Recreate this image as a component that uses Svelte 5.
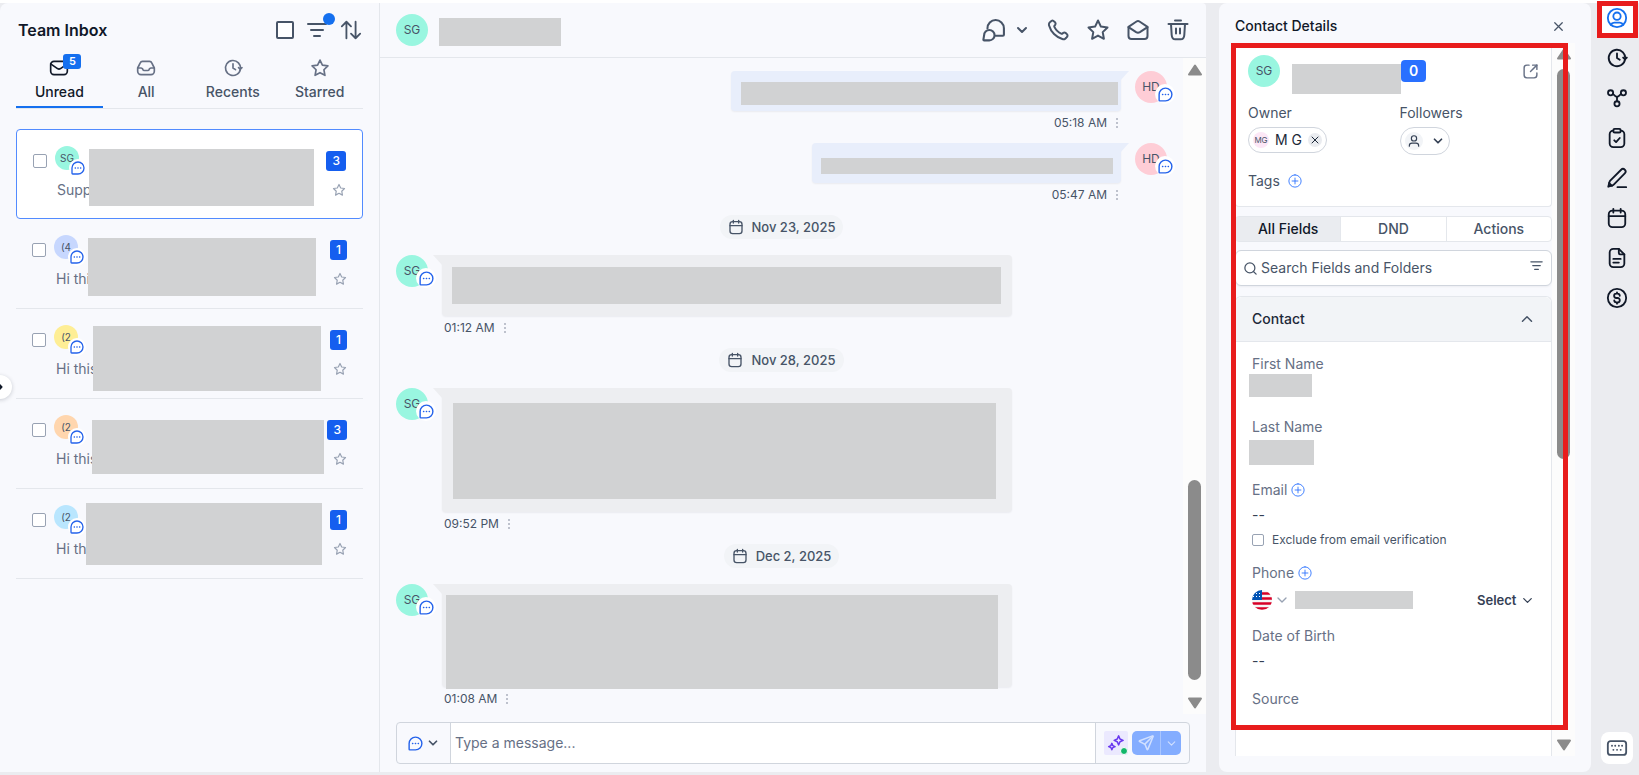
<script lang="ts">
    const icons: Record<string, string[]> = {
        filter: ['M3 6h18', 'M6 12h12', 'M9 18h6'],
        sort: ['M7 21V3M7 3L2 8M7 3l5 5', 'M17 3v18M17 21l-5-5M17 21l5-5'],
        mail: ['M6 4h12a4 4 0 0 1 4 4v8a4 4 0 0 1-4 4H6a4 4 0 0 1-4-4V8a4 4 0 0 1 4-4z', 'M2 7l8.2 5.7q1.8 1.1 3.6 0L22 7'],
        inbox: ['M2.5 12h3.7a2 2 0 0 1 1.7 1.1l.3.6A2 2 0 0 0 10 15h4a2 2 0 0 0 1.8-1.3l.3-.6A2 2 0 0 1 17.8 12h3.7', 'M7.8 4h8.4a3 3 0 0 1 2.7 1.9L22 12v4a4 4 0 0 1-4 4H6a4 4 0 0 1-4-4v-4l3.100-6.100A3 3 0 0 1 7.800 4z'],
        recent: ['M22.7 11.5l-2 2-2-2', 'M20.9 13A9 9 0 1 1 18.5 5.8 9 9 0 0 1 21 12', 'M12 7v5l3 2'],
        star: ['M12 2.5l2.9 6.1 6.6.9-4.8 4.6 1.2 6.7-5.9-3.2-5.9 3.2 1.2-6.7-4.8-4.6 6.6-.9z'],
        chat: ['M12 3a9 9 0 1 1 0 18H4q-1 0-1-1v-8a9 9 0 0 1 9-9z', 'M7.8 12h.4M11.8 12h.4M15.8 12h.4'],
        conversations: ['M6.2 10A7.9 7.9 0 0 1 22 9.8V16q0 1-1 1h-7', 'M8 11.5a5 5 0 1 1 0 10H3q-.8 0-.7-.8l.7-4.200a5 5 0 0 1 5-5z'],
        phone: ['M8.38 8.853c.696 1.45 1.645 2.809 2.847 4.01 1.201 1.202 2.56 2.151 4.01 2.847.444.213.8.18 1.127-.035.3-.2.6-.6.939-.858a2 2 0 0 1 2.18 0c.176.115.351.29.7.639l.195.195c.532.531.798.797.942 1.082a2 2 0 0 1 0 1.806c-.144.285-.41.551-.942 1.082l-.158.158c-.529.53-.794.795-1.154.997-.4.224-1.02.386-1.478.384-.413-.001-.695-.081-1.26-.241a18.5 18.5 0 0 1-8.283-4.874A18.5 18.5 0 0 1 3.171 7.761c-.16-.564-.24-.846-.241-1.259-.002-.459.16-1.079.384-1.478.202-.36.467-.625.997-1.155l.157-.157c.532-.532.798-.798 1.083-.942a2 2 0 0 1 1.805 0c.286.144.552.41 1.083.942l.195.194c.35.35.524.525.638.701a2 2 0 0 1 0 2.18c-.3.46-.7.7-.858.939-.2.3-.23.7-.034 1.127z'],
        mailOpen: ['M21.5 18V8.8l-8-5.3q-1.5-1-3 0l-8 5.3V18a3 3 0 0 0 3 3h13a3 3 0 0 0 3-3z', 'M2.5 9.2l7.6 5q1.9 1.1 3.8 0l7.6-5'],
        trash: ['M9 2.5h6', 'M2.5 6h19', 'M5 6l.7 11c.2 3 .9 4.3 3.6 4.3h5.4c2.7 0 3.4-1.3 3.6-4.3L19 6', 'M10 10.5v5M14 10.5v5'],
        calendar: ['M7 4h10a4 4 0 0 1 4 4v10a4 4 0 0 1-4 4H7a4 4 0 0 1-4-4V8a4 4 0 0 1 4-4z', 'M3 10h18', 'M8 2v4M16 2v4'],
        chevronDown: ['M6 9l6 6 6-6'],
        chevronUp: ['M18 15l-6-6-6 6'],
        chevronRight: ['M9 18l6-6-6-6'],
        close: ['M18 6L6 18M6 6l12 12'],
        external: ['M21 9V3h-6', 'M21 3l-9 9', 'M10 3H7a4 4 0 0 0-4 4v10a4 4 0 0 0 4 4h10a4 4 0 0 0 4-4v-3'],
        plus: ['M12 1.5a10.5 10.5 0 1 1 0 21 10.5 10.5 0 0 1 0-21z', 'M12 7v10M7 12h10'],
        user: ['M12 3a4.5 4.5 0 1 1 0 9 4.5 4.5 0 0 1 0-9z', 'M4 21v-1a4.5 4.5 0 0 1 4.5-4.5h7A4.5 4.5 0 0 1 20 20v1'],
        search: ['M11 3a8 8 0 1 1 0 16 8 8 0 0 1 0-16z', 'M21 21l-4.3-4.3'],
        profile: ['M12 2a10 10 0 1 1 0 20 10 10 0 0 1 0-20z', 'M12 6a4 4 0 1 1 0 8 4 4 0 0 1 0-8z', 'M5.3 19.4q1-2.4 3.7-2.4h6q2.7 0 3.7 2.4'],
        nodes: ['M5 3.5a2.8 2.8 0 1 1 0 5.6 2.8 2.8 0 0 1 0-5.6z', 'M19 3.5a2.8 2.8 0 1 1 0 5.6 2.8 2.8 0 0 1 0-5.6z', 'M12 15.5a2.8 2.8 0 1 1 0 5.6 2.8 2.8 0 0 1 0-5.6z', 'M7.5 7.5l3 2.7q1.5 1.1 3 0l3-2.7', 'M12 11v4.5'],
        clipboard: ['M16 4a4 4 0 0 1 4 4v10a4 4 0 0 1-4 4H8a4 4 0 0 1-4-4V8a4 4 0 0 1 4-4', 'M9.5 2h5A1.5 1.5 0 0 1 16 3.5v1A1.5 1.5 0 0 1 14.5 6h-5A1.5 1.5 0 0 1 8 4.5v-1A1.5 1.5 0 0 1 9.5 2z', 'M9 14.5l2 2 4-4.5'],
        pen: ['M12.5 22H22', 'M2.5 21.5l1.2-4.8q.2-1 .9-1.8L16.5 3a2.8 2.8 0 0 1 4 4L8.7 19q-.7.7-1.6 1z', 'M3.5 17.5l3 3'],
        file: ['M14 2H8a4 4 0 0 0-4 4v12a4 4 0 0 0 4 4h8a4 4 0 0 0 4-4V8z', 'M14 2v4.5Q14 8 15.5 8H20', 'M8 13h8M8 17h6'],
        dollar: ['M12 2a10 10 0 1 1 0 20 10 10 0 0 1 0-20z', 'M9 14.5a2.2 2.2 0 0 0 2.2 2.2h1.5a2.35 2.35 0 0 0 0-4.7h-1.5a2.35 2.35 0 0 1 0-4.7h1.5A2.2 2.2 0 0 1 15 9.5M12 5.8v1.5M12 16.7v1.5'],
        keyboard: ['M5 4.5h14a3 3 0 0 1 3 3v9a3 3 0 0 1-3 3H5a3 3 0 0 1-3-3v-9a3 3 0 0 1 3-3z', 'M6.5 9.5h.1M10 9.5h.1M14 9.5h.1M17.5 9.5h.1M8 14h.1M12 14h.1M16 14h.1'],
        sparkles: ['M15.5 2.5l1.8 4.2L21.5 8.5l-4.2 1.8-1.8 4.2-1.8-4.2-4.2-1.8 4.2-1.8z', 'M6.5 12.5l1.3 3 3 1.3-3 1.3-1.3 3-1.3-3-3-1.3 3-1.3z'],
        send: ['M10.5 13.5L21 3', 'M10.7 13.8l2.7 6.7q.5 1 1 0L21.5 3.3q.2-.8-.8-.8L3.5 9q-1 .5 0 1z'],
        dots: ['M12 4v.1M12 12v.1M12 20v.1']
    };

    const tabs = [
        { label: 'Unread', icon: 'mail', count: 5 },
        { label: 'All', icon: 'inbox' },
        { label: 'Recents', icon: 'recent' },
        { label: 'Starred', icon: 'star' }
    ];

    // cover: inset of the hidden area inside the row
    const conversations = [
        { initials: 'SG', color: '#99f6e0', preview: 'Supp', count: 3, cover: '19px 48px 12px 72px' },
        { initials: '(4', color: '#c7d7fe', preview: 'Hi this', count: 1, cover: '19px 47px 12px 72px' },
        { initials: '(2', color: '#feee95', preview: 'Hi this', count: 1, cover: '17px 42px 7px 77px' },
        { initials: '(2', color: '#ffd6ae', preview: 'Hi this', count: 3, cover: '21px 39px 14px 76px' },
        { initials: '(2', color: '#b9e6fe', preview: 'Hi this', count: 1, cover: '14px 41px 13px 70px' }
    ];

    const thread = [
        { out: true, time: '05:18 AM', width: 390, height: 40, cover: '11px 3px 6px 10px' },
        { out: true, time: '05:47 AM', width: 309, height: 40, cover: '15px 8px 9px 9px' },
        { date: 'Nov 23, 2025' },
        { time: '01:12 AM', width: 570, height: 61, cover: '12px 11px 12px 10px' },
        { date: 'Nov 28, 2025' },
        { time: '09:52 PM', width: 570, height: 124, cover: '15px 16px 13px 11px' },
        { date: 'Dec 2, 2025' },
        { time: '01:08 AM', width: 570, height: 103, cover: '11px 14px -2px 4px' }
    ];

    const chatActions = [
        { icon: 'phone', label: 'Call' },
        { icon: 'star', label: 'Star' },
        { icon: 'mailOpen', label: 'Mark as read' },
        { icon: 'trash', label: 'Delete' }
    ];

    const tools = [
        { icon: 'recent', label: 'Activity' },
        { icon: 'nodes', label: 'Associations' },
        { icon: 'clipboard', label: 'Tasks' },
        { icon: 'pen', label: 'Notes' },
        { icon: 'calendar', label: 'Appointments' },
        { icon: 'file', label: 'Documents' },
        { icon: 'dollar', label: 'Payments' }
    ];

    let activeTab = $state('Unread');
    let fieldTab = $state('All Fields');
    let message = $state('');
    let query = $state('');
</script>

{#snippet icon(name: string, size: number, stroke: number = 2)}
    <svg width={size} height={size} viewBox="0 0 24 24" fill="none" stroke="currentColor" stroke-width={stroke} stroke-linecap="round" stroke-linejoin="round" aria-hidden="true">
        {#each icons[name] as d}
            <path {d} />
        {/each}
    </svg>
{/snippet}

{#snippet scrollbar(kind: string)}
    <div class="scrollbar {kind}">
        <svg width="16" height="12" viewBox="0 0 16 12"><path d="M8 1.5L14 10.5H2z" fill="#8b8b8b" stroke="#8b8b8b" stroke-width="2" stroke-linejoin="round" /></svg>
        <div class="track"><div class="thumb"></div></div>
        <svg width="16" height="12" viewBox="0 0 16 12"><path d="M8 10.5L14 1.5H2z" fill="#8b8b8b" stroke="#8b8b8b" stroke-width="2" stroke-linejoin="round" /></svg>
    </div>
{/snippet}

<div class="app">
    <section class="inbox">
        <header class="inbox-header">
            <h1>Team Inbox</h1>
            <input class="select-all" type="checkbox" aria-label="Select all" />
            <button class="filter" aria-label="Filter">{@render icon('filter', 24, 2)}<span class="dot"></span></button>
            <button aria-label="Sort">{@render icon('sort', 22, 2)}</button>
        </header>

        <nav class="tabs">
            {#each tabs as tab}
                <button class="tab" class:active={activeTab === tab.label} onclick={() => (activeTab = tab.label)}>
                    <span class="tab-icon">
                        {@render icon(tab.icon, 20, 2)}
                        {#if tab.count}<span class="tab-count">{tab.count}</span>{/if}
                    </span>
                    <span>{tab.label}</span>
                </button>
            {/each}
        </nav>

        <div class="list">
            {#each conversations as item, i}
                <article class="row" class:selected={i === 0}>
                    <div class="row-top">
                        <input type="checkbox" aria-label="Select conversation" />
                        <span class="avatar small" style="background-color: {item.color}">
                            {item.initials}
                            <span class="channel">{@render icon('chat', 16, 2)}</span>
                        </span>
                        <span class="row-count">{item.count}</span>
                    </div>
                    <div class="row-bottom">
                        <span class="preview">{item.preview}</span>
                        <button class="row-star" aria-label="Star conversation">{@render icon('star', 14, 2)}</button>
                    </div>
                    <span class="cover" style="inset: {item.cover}"></span>
                </article>
            {/each}
        </div>
        <button class="expander" aria-label="Expand menu">{@render icon('chevronRight', 12, 4)}</button>
    </section>

    <main class="chat">
        <header class="chat-header">
            <span class="avatar">SG</span>
            <span class="block name-block"></span>
            <div class="chat-actions">
                <button class="assign" aria-label="Conversations">
                    {@render icon('conversations', 25, 2)}
                    {@render icon('chevronDown', 16, 3)}
                </button>
                {#each chatActions as action}
                    <button aria-label={action.label}>{@render icon(action.icon, 24, 2)}</button>
                {/each}
            </div>
        </header>

        <div class="chat-body">
            <div class="messages">
                {#each thread as entry}
                    {#if entry.date}
                        <div class="date">{@render icon('calendar', 16, 2)}{entry.date}</div>
                    {:else}
                        <div class="message" class:out={entry.out}>
                            <span class="avatar">
                                {entry.out ? 'HD' : 'SG'}
                                <span class="channel">{@render icon('chat', 17, 2)}</span>
                            </span>
                            <div class="message-body">
                                <div class="bubble" style="width: {entry.width}px; height: {entry.height}px">
                                    <span class="cover" style="inset: {entry.cover}"></span>
                                </div>
                                <div class="meta">
                                    <time>{entry.time}</time>
                                    <button aria-label="Message options">{@render icon('dots', 12, 3)}</button>
                                </div>
                            </div>
                        </div>
                    {/if}
                {/each}
            </div>
            {@render scrollbar('chat-scroll')}
        </div>

        <form class="composer" onsubmit={(e) => e.preventDefault()}>
            <button class="channel-picker" type="button" aria-label="Choose channel">
                {@render icon('chat', 17, 2)}
                {@render icon('chevronDown', 14, 3)}
            </button>
            <input type="text" placeholder="Type a message..." aria-label="Message" bind:value={message} />
            <div class="composer-actions">
                <button class="ai" type="button" aria-label="Write with AI">{@render icon('sparkles', 18, 2)}<span class="status"></span></button>
                <div class="send">
                    <button type="submit" aria-label="Send">{@render icon('send', 18, 2)}</button>
                    <button class="send-more" type="button" aria-label="Send options">{@render icon('chevronDown', 13, 2)}</button>
                </div>
            </div>
        </form>
    </main>

    <aside class="details">
        <header class="details-header">
            <h2>Contact Details</h2>
            <button aria-label="Close">{@render icon('close', 15, 2)}</button>
        </header>

        <div class="details-body">
            <div class="details-content">
                <section class="card">
                    <div class="contact">
                        <span class="avatar">SG</span>
                        <span class="block contact-block"></span>
                        <span class="score">0</span>
                        <button class="open" aria-label="Open contact">{@render icon('external', 17, 2)}</button>
                    </div>
                    <div class="people">
                        <div>
                            <h3>Owner</h3>
                            <span class="pill owner">
                                <span class="owner-avatar">MG</span>
                                M G
                                <button class="remove" aria-label="Remove owner">{@render icon('close', 12, 2)}</button>
                            </span>
                        </div>
                        <div>
                            <h3>Followers</h3>
                            <button class="pill followers" aria-label="Add followers">
                                <span class="follower-icon">{@render icon('user', 14, 2)}</span>
                                {@render icon('chevronDown', 14, 3)}
                            </button>
                        </div>
                    </div>
                    <div class="tags">Tags <button class="add" aria-label="Add tag">{@render icon('plus', 14, 1.5)}</button></div>
                </section>

                <div class="field-tabs">
                    {#each ['All Fields', 'DND', 'Actions'] as name}
                        <button class:active={fieldTab === name} onclick={() => (fieldTab = name)}>{name}</button>
                    {/each}
                </div>

                <div class="search">
                    {@render icon('search', 15, 2)}
                    <input type="text" placeholder="Search Fields and Folders" aria-label="Search Fields and Folders" bind:value={query} />
                    <button aria-label="Filter fields">{@render icon('filter', 15, 2)}</button>
                </div>

                <section class="panel">
                    <button class="panel-header">Contact {@render icon('chevronUp', 18, 2)}</button>
                    <div class="fields">
                        <div class="field">
                            <span class="label">First Name</span>
                            <div class="value first-name"><span class="block"></span></div>
                        </div>
                        <div class="field">
                            <span class="label">Last Name</span>
                            <div class="value last-name"><span class="block"></span></div>
                        </div>
                        <div class="field">
                            <span class="label">Email <button class="add" aria-label="Add email">{@render icon('plus', 14, 1.5)}</button></span>
                            <div class="value">--</div>
                            <label class="exclude"><input type="checkbox" /> Exclude from email verification</label>
                        </div>
                        <div class="field">
                            <span class="label">Phone <button class="add" aria-label="Add phone">{@render icon('plus', 14, 1.5)}</button></span>
                            <div class="value phone">
                                <button class="country" aria-label="Country">
                                    <svg width="20" height="20" viewBox="0 0 20 20" aria-hidden="true">
                                        <clipPath id="flag"><circle cx="10" cy="10" r="10" /></clipPath>
                                        <g clip-path="url(#flag)">
                                            <rect width="20" height="20" fill="#f5f5f5" />
                                            <path d="M10 3.5h10M10 8.5h10M0 13.5h20M0 18.5h20" stroke="#d80027" stroke-width="2.6" />
                                            <rect width="10" height="10" fill="#0052b4" />
                                            <path d="M1 3.5h8M1 6.5h8" stroke="#fff" stroke-width="1" stroke-dasharray="1 2" />
                                        </g>
                                    </svg>
                                    {@render icon('chevronDown', 16, 2)}
                                </button>
                                <span class="block phone-block"></span>
                                <span class="select-wrap">
                                    <select aria-label="Phone type"><option>Select</option></select>
                                    {@render icon('chevronDown', 15, 2)}
                                </span>
                            </div>
                        </div>
                        <div class="field">
                            <span class="label">Date of Birth</span>
                            <div class="value">--</div>
                        </div>
                        <div class="field">
                            <span class="label">Source</span>
                        </div>
                    </div>
                </section>
            </div>
            {@render scrollbar('details-scroll')}
        </div>
        <div class="highlight"></div>
    </aside>

    <nav class="rail">
        <button class="rail-active" aria-label="Contact">{@render icon('profile', 22, 2)}</button>
        {#each tools as tool}
            <button aria-label={tool.label}>{@render icon(tool.icon, 22, 2)}</button>
        {/each}
        <button class="keyboard" aria-label="Keyboard shortcuts">{@render icon('keyboard', 22, 2)}</button>
    </nav>
</div>

<style>
    :global(body) {
        background: #ebecf0;
    }

    .app {
        box-sizing: border-box;
        display: flex;
        height: 100vh;
        min-height: 760px;
        border-top: 3px solid #fff;
        padding-bottom: 3px;
        background: #ebecf0;
        color: #475467;
        font-family: Inter, 'Liberation Sans', sans-serif;
        font-size: 14px;
        line-height: 20px;
    }

    .app :global(*) {
        box-sizing: border-box;
    }

    button {
        display: flex;
        align-items: center;
        justify-content: center;
        padding: 0;
        border: 0;
        background: none;
        color: inherit;
        font: inherit;
        cursor: pointer;
    }

    svg {
        display: block;
        flex-shrink: 0;
    }

    h1, h2, h3 {
        margin: 0;
    }

    input[type='checkbox'] {
        appearance: none;
        width: 14px;
        height: 14px;
        margin: 0;
        border: 1px solid #98a2b3;
        border-radius: 2px;
        background: #fff;
    }

    .block,
    .cover {
        background: #d1d2d3;
    }

    .cover {
        position: absolute;
    }

    .avatar {
        position: relative;
        display: flex;
        flex-shrink: 0;
        align-items: center;
        justify-content: center;
        width: 32px;
        height: 32px;
        border-radius: 50%;
        background: #99f6e0;
        font-size: 12px;
    }

    .avatar.small {
        align-self: flex-start;
        width: 24px;
        height: 24px;
        font-size: 10px;
    }

    .channel {
        position: absolute;
        right: -8px;
        bottom: -1px;
        display: flex;
        align-items: center;
        justify-content: center;
        width: 20px;
        height: 20px;
        border-radius: 50%;
        background: #fff;
        color: #2563eb;
    }

    .small .channel {
        right: -8px;
        bottom: -7px;
        width: 18px;
        height: 18px;
    }

    /* Inbox */
    .inbox {
        position: relative;
        flex: 0 0 380px;
        padding: 0 16px;
        border-right: 1px solid #e4e7ec;
        border-radius: 8px 0 0 0;
        background: #f8f9fd;
    }

    .inbox-header {
        display: flex;
        align-items: center;
        gap: 11px;
        height: 54px;
        padding: 0 1px 0 2px;
    }

    .inbox-header h1 {
        flex: 1;
        color: #101828;
        font-size: 16px;
        font-weight: 600;
    }

    .inbox-header .select-all {
        width: 18px;
        height: 18px;
        border: 2px solid #475467;
    }

    .filter {
        position: relative;
    }

    .dot {
        position: absolute;
        top: -5px;
        right: -6px;
        width: 12px;
        height: 12px;
        border-radius: 50%;
        background: #1570ef;
    }

    .tabs {
        display: flex;
        border-bottom: 1px solid #e4e7ec;
    }

    .tab {
        flex: 1;
        flex-direction: column;
        gap: 4px;
        padding: 1px 0 4px;
        border-bottom: 2px solid transparent;
        font-weight: 500;
    }

    .tab.active {
        border-color: #1570ef;
        color: #101828;
    }

    .tab-icon {
        position: relative;
        color: #667085;
    }

    .active .tab-icon {
        color: #101828;
    }

    .tab-count {
        position: absolute;
        top: -4px;
        left: 14px;
        width: 18px;
        height: 15px;
        border-radius: 3px;
        background: #1570ef;
        color: #fff;
        font-size: 11px;
        font-weight: 600;
        line-height: 15px;
    }

    .list {
        margin-top: 20px;
    }

    .row {
        position: relative;
        height: 90px;
        padding: 16px 16px 0;
        border-bottom: 1px solid #e4e7ec;
    }

    .row.selected {
        border: 1px solid #528bff;
        border-radius: 4px;
        background: #fff;
    }

    .row-top {
        display: flex;
        align-items: center;
        gap: 8px;
        height: 30px;
    }

    .row-count {
        margin-left: auto;
        padding: 0 6px;
        border-radius: 3px;
        background: #155eef;
        color: #fff;
        font-size: 12px;
        font-weight: 500;
    }

    .row-bottom {
        display: flex;
        align-items: center;
        justify-content: space-between;
        height: 28px;
        padding-left: 24px;
        color: #667085;
    }

    .row-star {
        color: #98a2b3;
    }

    .expander {
        position: absolute;
        top: 372px;
        left: -12px;
        width: 24px;
        height: 24px;
        border-radius: 50%;
        background: #fff;
        box-shadow: 0 1px 4px rgba(16, 24, 40, 0.2);
        color: #101828;
    }

    /* Conversation */
    .chat {
        display: flex;
        flex: 1;
        flex-direction: column;
        min-width: 0;
        margin-right: 13px;
        border-radius: 0 4px 0 0;
        background: #f8f9fd;
    }

    .chat-header {
        display: flex;
        flex: 0 0 55px;
        align-items: center;
        padding: 0 16px;
        border-bottom: 1px solid #e4e7ec;
    }

    .name-block {
        width: 122px;
        height: 28px;
        margin: 3px 0 0 11px;
    }

    .chat-actions {
        display: flex;
        gap: 16px;
        margin-left: auto;
    }

    .assign {
        gap: 8px;
    }

    .chat-body {
        display: flex;
        flex: 1;
        min-height: 0;
    }

    .messages {
        display: flex;
        flex: 1;
        flex-direction: column;
        gap: 10px;
        min-width: 0;
        padding: 13px 16px 0;
        overflow: hidden;
    }

    .message {
        display: flex;
        gap: 14px;
    }

    .message.out {
        flex-direction: row-reverse;
    }

    .out .avatar {
        background: #fecdd6;
    }

    .message-body {
        display: flex;
        flex-direction: column;
        gap: 2px;
        min-width: 0;
    }

    .out .message-body {
        align-items: flex-end;
    }

    .bubble {
        position: relative;
        max-width: 100%;
        border-radius: 0 4px 4px 4px;
        background: #edeef1;
        box-shadow: 0 1px 2px rgba(16, 24, 40, 0.06);
    }

    .bubble::before {
        position: absolute;
        top: 0;
        left: -9px;
        border-top: 10px solid #edeef1;
        border-left: 9px solid transparent;
        content: '';
    }

    .out .bubble {
        border-radius: 4px 0 4px 4px;
        background: #e8eefb;
    }

    .out .bubble::before {
        right: -8px;
        left: auto;
        border-top-color: #e8eefb;
        border-right: 9px solid transparent;
        border-left: 0;
    }

    .meta {
        display: flex;
        align-items: center;
        gap: 6px;
        padding: 0 2px;
        font-size: 12px;
    }

    .out .meta {
        padding-right: 0;
    }

    .meta button {
        width: 8px;
        color: #667085;
    }

    .date {
        display: flex;
        align-items: center;
        align-self: center;
        gap: 8px;
        height: 24px;
        margin-bottom: 6px;
        padding: 0 8px;
        border-radius: 12px;
        background: #f2f4f7;
        font-size: 13px;
        font-weight: 500;
    }

    .scrollbar {
        display: flex;
        flex: 0 0 23px;
        flex-direction: column;
        align-items: center;
        background: #fcfcfc;
    }

    .track {
        display: flex;
        flex: 1;
        flex-direction: column;
    }

    .thumb {
        width: 13px;
        border-radius: 7px;
        background: #8b8b8b;
    }

    .chat-scroll {
        padding: 6px 0 5px;
    }

    .chat-scroll .thumb {
        height: 200px;
        margin: auto 0 17px;
    }

    .composer {
        display: flex;
        flex: 0 0 42px;
        margin: 8px 16px;
        border: 1px solid #d0d5dd;
        border-radius: 4px;
        overflow: hidden;
    }

    .channel-picker {
        gap: 2px;
        width: 54px;
        border-right: 1px solid #d0d5dd;
    }

    .channel-picker :global(svg:first-child) {
        color: #2563eb;
    }

    .composer input {
        flex: 1;
        min-width: 0;
        padding: 0 4px;
        border: 0;
        background: #fff;
        color: #344054;
        font: inherit;
        outline: 0;
    }

    .composer input::placeholder {
        color: #667085;
        opacity: 1;
    }

    .composer-actions {
        display: flex;
        align-items: center;
        gap: 4px;
        padding: 0 8px;
        border-left: 1px solid #d0d5dd;
    }

    .ai {
        position: relative;
        width: 24px;
        height: 24px;
        border-radius: 2px;
        background: #ebe9fe;
        color: #6938ef;
    }

    .status {
        position: absolute;
        right: 0;
        bottom: 0;
        width: 8px;
        height: 8px;
        border: 1px solid #fff;
        border-radius: 50%;
        background: #12b76a;
    }

    .send {
        display: flex;
        height: 24px;
        border-radius: 5px;
        background: #84adff;
        color: #d1e0ff;
    }

    .send button {
        width: 28px;
    }

    .send .send-more {
        width: 21px;
        border-left: 1px solid #a9c6ff;
    }

    /* Contact details */
    .details {
        position: relative;
        display: flex;
        flex: 0 0 372px;
        flex-direction: column;
        padding: 0 16px 16px;
        border-radius: 8px;
        background: #f8f9fd;
    }

    .details-header {
        display: flex;
        flex: 0 0 40px;
        align-items: center;
        justify-content: space-between;
        padding: 6px 9px 0 0;
    }

    .details-header h2 {
        color: #101828;
        font-size: 14px;
        font-weight: 500;
    }

    .details-body {
        display: flex;
        flex: 1;
        min-height: 0;
    }

    .details-content {
        display: flex;
        flex: 1;
        flex-direction: column;
        min-width: 0;
    }

    .card {
        padding: 12px 12px 15px;
        border: 1px solid #e4e7ec;
        border-top: 0;
        border-radius: 0 0 4px 4px;
        background: #fff;
    }

    .contact {
        display: flex;
        align-items: center;
        height: 32px;
    }

    .contact-block {
        width: 109px;
        height: 30px;
        margin: 16px 0 0 12px;
    }

    .score {
        width: 25px;
        height: 22px;
        border-radius: 4px;
        background: #2970ff;
        color: #fff;
        font-weight: 600;
        line-height: 22px;
        text-align: center;
    }

    .open {
        margin-left: auto;
        color: #667085;
    }

    .people {
        display: grid;
        grid-template-columns: 1fr 1fr;
        gap: 12px;
        margin: 16px 0;
    }

    h3 {
        margin-bottom: 4px;
        font-size: 14px;
        font-weight: 400;
    }

    .pill {
        display: inline-flex;
        align-items: center;
        border: 1px solid #d0d5dd;
        border-radius: 14px;
        background: #fff;
    }

    .owner {
        gap: 6px;
        height: 26px;
        padding: 0 4px;
        color: #1d2939;
    }

    .owner-avatar {
        width: 16px;
        height: 16px;
        border-radius: 50%;
        background: #fce7f6;
        color: #475467;
        font-size: 8px;
        line-height: 16px;
        text-align: center;
    }

    .remove {
        width: 14px;
        height: 14px;
        border-radius: 50%;
        background: #eaecf0;
    }

    .followers {
        gap: 8px;
        height: 28px;
        padding: 0 4px;
        color: #344054;
    }

    .follower-icon {
        display: flex;
        align-items: center;
        justify-content: center;
        width: 18px;
        height: 18px;
        border-radius: 50%;
        background: #f2f4f7;
    }

    .tags,
    .label {
        display: flex;
        align-items: center;
        gap: 8px;
    }

    .add {
        color: #2970ff;
    }

    .field-tabs {
        display: flex;
        height: 26px;
        margin: 9px 0 8px;
        border: 1px solid #e4e7ec;
        border-radius: 4px;
        background: #fff;
    }

    .field-tabs button {
        flex: 1;
        font-weight: 500;
    }

    .field-tabs button + button {
        border-left: 1px solid #e4e7ec;
    }

    .field-tabs .active {
        background: #eaecf0;
        color: #101828;
    }

    .search {
        display: flex;
        flex: 0 0 36px;
        align-items: center;
        gap: 3px;
        padding: 0 7px;
        border: 1px solid #d0d5dd;
        border-radius: 6px;
        background: #fff;
        box-shadow: 0 1px 2px rgba(16, 24, 40, 0.05);
    }

    .search input {
        flex: 1;
        min-width: 0;
        padding: 0;
        border: 0;
        background: none;
        color: #344054;
        font: inherit;
        outline: 0;
    }

    .search input::placeholder {
        color: #475467;
        opacity: 1;
    }

    .search button {
        padding-bottom: 5px;
    }

    .panel {
        flex: 1;
        min-height: 0;
        margin-top: 10px;
        border: 1px solid #e4e7ec;
        border-bottom: 0;
        border-radius: 6px 6px 0 0;
        background: #fff;
    }

    .panel-header {
        justify-content: space-between;
        width: 100%;
        height: 45px;
        padding: 0 15px 0 16px;
        border-bottom: 1px solid #e4e7ec;
        border-radius: 6px 6px 0 0;
        background: #f2f4f7;
        color: #1d2939;
        font-weight: 500;
    }

    .panel-header :global(svg) {
        color: #475467;
    }

    .fields {
        display: flex;
        flex-direction: column;
        gap: 13px;
        padding: 12px 16px 0;
    }

    .label {
        gap: 4px;
        color: #667085;
    }

    .value {
        display: flex;
        align-items: center;
        height: 30px;
        color: #344054;
    }

    .first-name,
    .last-name {
        margin-left: -3px;
    }

    .first-name {
        align-items: flex-start;
    }

    .first-name .block {
        width: 63px;
        height: 23px;
    }

    .last-name .block {
        width: 65px;
        height: 25px;
    }

    .exclude {
        display: flex;
        align-items: center;
        gap: 8px;
        font-size: 12px;
    }

    .exclude input[type='checkbox'] {
        width: 12px;
        height: 12px;
    }

    .phone {
        padding-top: 4px;
    }

    .country {
        gap: 2px;
        color: #98a2b3;
    }

    .phone-block {
        width: 118px;
        height: 18px;
        margin-left: 5px;
    }

    .select-wrap {
        display: flex;
        align-items: center;
        gap: 3px;
        margin-left: auto;
    }

    select {
        appearance: none;
        padding: 0;
        border: 0;
        background: none;
        color: #344054;
        font: inherit;
        font-size: 13px;
        font-weight: 600;
    }

    .details-scroll {
        padding: 5px 0;
    }

    .details-scroll .thumb {
        height: 390px;
        margin-top: 9px;
    }

    .highlight {
        position: absolute;
        inset: 40px 23px 42px 12px;
        border: 5px solid #e81c1c;
        pointer-events: none;
    }

    /* Tool rail */
    .rail {
        display: flex;
        flex: 0 0 48px;
        flex-direction: column;
        align-items: center;
        gap: 18px;
        padding: 0 0 8px 4px;
        color: #101828;
    }

    .rail-active {
        width: 41px;
        height: 37px;
        margin: -2px 0 -9px;
        padding-bottom: 3px;
        border: 5px solid #e81c1c;
        background: #fff;
        color: #1570ef;
    }

    .keyboard {
        width: 32px;
        height: 32px;
        margin-top: auto;
        border-radius: 8px;
        background: #fff;
        color: #475467;
    }
</style>
